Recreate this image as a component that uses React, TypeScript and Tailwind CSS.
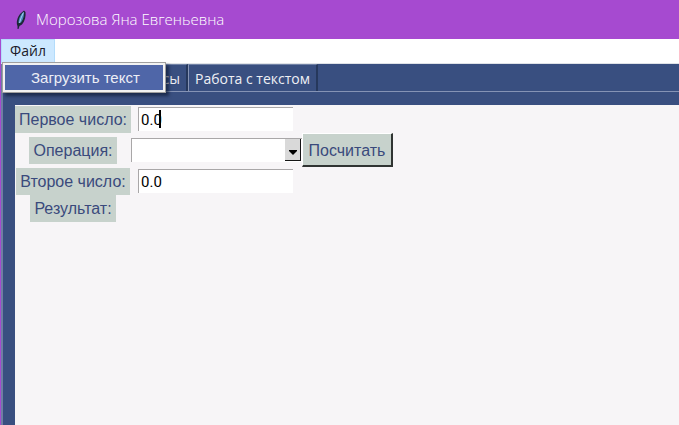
import { useState } from "react";
import type { ReactNode } from "react";

function FeatherIcon() {
  return (
    <svg width="12" height="20" viewBox="0 0 12 20" aria-hidden="true">
      <path d="M2.500 19 L2.500 16 C1 13 2 7 6 3 L9 .5 L10.500 2 C11 6 10 11 7 14.500 L4.500 16 L3.500 19 Z" fill="#1c2836" />
      <path d="M3.500 13 C3.500 8 6 4 8.500 2 C9.500 5 8.500 9 6 12.500 Z" fill="#4b86bd" />
      <path d="M4.500 13 L6 8 L8.500 2.500" stroke="#a5cdec" strokeWidth="1" fill="none" />
    </svg>
  );
}

function FieldLabel({ htmlFor, children }: { htmlFor: string; children: ReactNode }) {
  return (
    <label htmlFor={htmlFor} className="h-[27px] justify-self-center bg-[#c7d2cc] px-1 text-base leading-[28px] whitespace-nowrap text-[#3a4a7c]">
      {children}
    </label>
  );
}

const entryClass =
  "block h-6 w-full border-t border-l border-t-[#a9a7a8] border-l-[#a9a7a8] bg-white pl-0.5 font-[Roboto,sans-serif] text-[15px] text-black outline-none";

const tabClass =
  "h-[27px] shrink-0 border-t border-r-2 border-l border-t-[#7182a6] border-r-[#26385c] border-l-[#8795b5] px-1.5 pt-0.5 text-right font-['Open_Sans',sans-serif] text-sm whitespace-nowrap text-[#eef0f5]";

export default function App() {
  const [first, setFirst] = useState("0.0");
  const [second, setSecond] = useState("0.0");
  const [operation, setOperation] = useState("");

  return (
    <div className="flex min-h-screen flex-col border-l border-[#a64ad0] bg-white font-['Liberation_Sans',Arial,sans-serif]">
      <header className="flex h-[39px] items-center gap-[9px] bg-[#a64ad0] pl-3.5">
        <FeatherIcon />
        <h1 className="font-['Open_Sans',sans-serif] text-[15px] font-light text-white">Морозова Яна Евгеньевна</h1>
      </header>

      <nav className="relative flex h-[25px] border-b border-[#dfe2e7] bg-white">
        <button type="button" aria-expanded="true" className="h-6 w-[54px] border border-[#b3dcfb] bg-[#cce8ff] font-['Open_Sans',sans-serif] text-sm text-[#1b1b2a]">
          Файл
        </button>
        <div role="menu" className="absolute top-[23px] left-px z-10 border border-[#a09f9f] bg-[#f2f2f2] p-0.5 shadow-[3px_3px_3px_rgba(10,20,45,0.6)]">
          <button type="button" role="menuitem" className="block h-[25px] w-[158px] bg-[#4f66a8] pt-0.5 pl-[26px] text-left text-[15px] text-[#eceef6]">
            Загрузить текст
          </button>
        </div>
      </nav>

      <main className="flex flex-1 flex-col border-l-2 border-[#6f7fa3] bg-[#394f80]">
        <div role="tablist" className="flex border-b border-[#8593b5]">
          <button type="button" role="tab" aria-selected="true" className={`${tabClass} w-[185px]`}>
            сы
          </button>
          <button type="button" role="tab" aria-selected="false" className={tabClass}>
            Работа с текстом
          </button>
        </div>

        <div className="flex flex-1 pt-[13px] pl-3">
          <form
            className="grid flex-1 grid-cols-[116px_171px_91px] grid-rows-[28px_34px_28px_27px] content-start items-center bg-[#f7f5f7]"
            onSubmit={(e) => e.preventDefault()}
          >
            <FieldLabel htmlFor="first">Первое число:</FieldLabel>
            <div className="relative col-span-2 w-[162px] pl-[7px]">
              <input id="first" value={first} onChange={(e) => setFirst(e.target.value)} className={`${entryClass} caret-transparent`} />
              <span className="pointer-events-none absolute top-[3px] left-7 h-[18px] w-0.5 bg-black" />
            </div>

            <FieldLabel htmlFor="operation">Операция:</FieldLabel>
            <div className="relative">
              <select
                id="operation"
                value={operation}
                onChange={(e) => setOperation(e.target.value)}
                className="block h-6 w-full appearance-none border-t border-l border-t-[#a9a7a8] border-l-[#a9a7a8] bg-white pl-1 text-sm text-black outline-none"
              >
                <option value=""></option>
                <option value="+">+</option>
                <option value="-">-</option>
                <option value="*">*</option>
                <option value="/">/</option>
              </select>
              <span className="pointer-events-none absolute top-px right-px flex h-[22px] w-4 items-end justify-center border-r border-b border-[#151515] bg-[#d9d9d9] pb-1">
                <svg width="10" height="6" viewBox="0 0 10 6" aria-hidden="true">
                  <path d="M1 0H9V1L5 5L1 1Z" fill="#000" />
                </svg>
              </span>
            </div>
            <button type="submit" className="h-[34px] border-t border-r-2 border-b-2 border-l border-t-white border-r-[#303432] border-b-[#303432] border-l-white bg-[#c7d2cc] pt-0.5 text-base whitespace-nowrap text-[#3a4a7c]">
              Посчитать
            </button>

            <FieldLabel htmlFor="second">Второе число:</FieldLabel>
            <div className="col-span-2 w-[162px] pl-[7px]">
              <input id="second" value={second} onChange={(e) => setSecond(e.target.value)} className={entryClass} />
            </div>

            <FieldLabel htmlFor="result">Результат:</FieldLabel>
            <output id="result" className="col-span-2" />
          </form>
        </div>
      </main>
    </div>
  );
}
